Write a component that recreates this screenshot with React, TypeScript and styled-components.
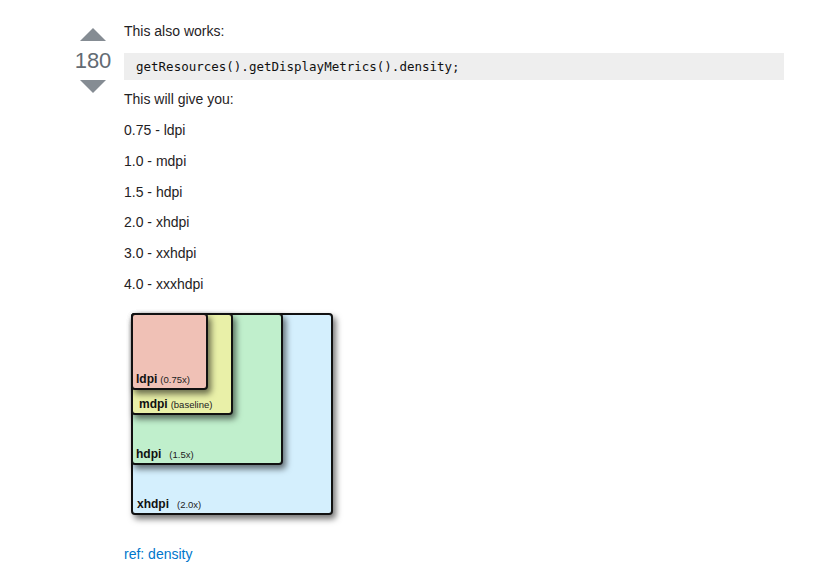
import React from "react";
import styled, { createGlobalStyle } from "styled-components";

const Global = createGlobalStyle`
  html, body { margin: 0; padding: 0; background: #fff; }
  body {
    font-family: "Liberation Sans", Arial, sans-serif;
    color: #1f2224;
    font-size: 14px;
  }
`;

const Page = styled.div`
  padding: 22px 0 0 64px;
`;

const Post = styled.div`
  display: flex;
  align-items: flex-start;
  gap: 2px;
`;

const VoteCell = styled.div`
  width: 58px;
  display: flex;
  flex-direction: column;
  align-items: center;
  padding-top: 6px;
`;

const Arrow = styled.div<{ $down?: boolean }>`
  width: 0;
  height: 0;
  border-left: 13px solid transparent;
  border-right: 13px solid transparent;
  ${(p) =>
    p.$down
      ? "border-top: 13px solid #858c93;"
      : "border-bottom: 13px solid #858c93;"}
`;

const Count = styled.div`
  font-size: 22px;
  line-height: 36px;
  margin: 2px 0 1px;
  color: #636b73;
`;

const PostCell = styled.div`
  width: 660px;
`;

const P = styled.p`
  margin: 0 0 12.9px;
  line-height: 18px;
`;

const Pre = styled.pre`
  margin: 0 0 10px;
  padding: 5px 12px;
  background: #eeeeee;
  font-family: "DejaVu Sans Mono", Consolas, monospace;
  font-size: 12.5px;
  line-height: 17px;
  color: #111;
`;

const Figure = styled.div`
  padding: 7px 0 0 7px;
  margin-bottom: 30px;
`;

const Box = styled.div<{ $size: number; $bg: string; $nested?: boolean }>`
  box-sizing: border-box;
  width: ${(p) => p.$size}px;
  height: ${(p) => p.$size}px;
  border: 2px solid #111;
  border-radius: 4px;
  background: ${(p) => p.$bg};
  box-shadow: 3px 4px 6px rgba(0, 0, 0, 0.55);
  display: flex;
  flex-direction: column;
  justify-content: space-between;
  ${(p) => (p.$nested ? "margin: -2px 0 0 -2px;" : "")}
`;

const Label = styled.div<{ $indent: number }>`
  margin-top: auto;
  padding: 0 0 2px ${(p) => p.$indent}px;
  font-family: "Liberation Sans", Arial, sans-serif;
  font-size: 12px;
  line-height: 12px;
  font-weight: bold;
  color: #111;
  white-space: nowrap;
`;

const Factor = styled.span<{ $gap: number }>`
  font-size: 9.5px;
  font-weight: normal;
  margin-left: ${(p) => p.$gap}px;
  color: #222;
`;

const Link = styled.a`
  color: #0077cc;
  text-decoration: none;
`;

export default function App() {
  return (
    <>
      <Global />
      <Page>
        <Post>
          <VoteCell>
            <Arrow />
            <Count>180</Count>
            <Arrow $down />
          </VoteCell>
          <PostCell>
            <P>This also works:</P>
            <Pre>getResources().getDisplayMetrics().density;</Pre>
            <P>This will give you:</P>
            <P>0.75 - ldpi</P>
            <P>1.0 - mdpi</P>
            <P>1.5 - hdpi</P>
            <P>2.0 - xhdpi</P>
            <P>3.0 - xxhdpi</P>
            <P>4.0 - xxxhdpi</P>
            <Figure>
              <Box $size={202} $bg="#d4effd">
                <Box $size={152} $bg="#c0efcc" $nested>
                  <Box $size={102} $bg="#e9f0a8" $nested>
                    <Box $size={77} $bg="#f0c1b6" $nested>
                      <Label $indent={3}>
                        ldpi<Factor $gap={3}>(0.75x)</Factor>
                      </Label>
                    </Box>
                    <Label $indent={6}>
                      mdpi<Factor $gap={3}>(baseline)</Factor>
                    </Label>
                  </Box>
                  <Label $indent={3}>
                    hdpi<Factor $gap={8}>(1.5x)</Factor>
                  </Label>
                </Box>
                <Label $indent={4}>
                  xhdpi<Factor $gap={8}>(2.0x)</Factor>
                </Label>
              </Box>
            </Figure>
            <P>
              <Link href="#">ref: density</Link>
            </P>
          </PostCell>
        </Post>
      </Page>
    </>
  );
}
